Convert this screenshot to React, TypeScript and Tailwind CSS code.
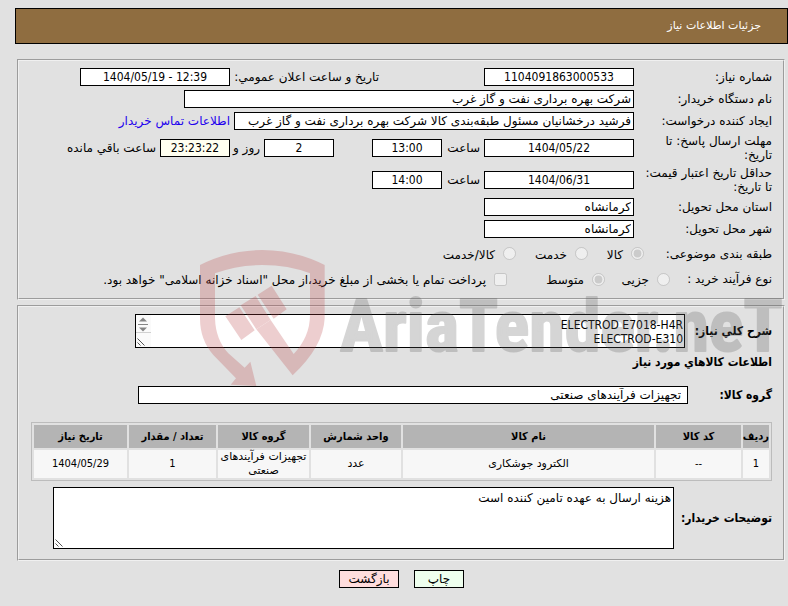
import React from 'react';
import { clsx } from 'clsx';

type FieldProps = {
  id: string;
  value: string;
  className?: string;
  label?: string;
};

const Field: React.FC<FieldProps> = ({ id, value, className, label }) => (
  <input
    id={id}
    type="text"
    readOnly
    aria-label={label}
    defaultValue={value}
    className={clsx('h-[18px] min-w-0 border border-black px-0.5 outline-none', className)}
  />
);

// centred numeric value, always read left to right
const NumberField: React.FC<FieldProps> = ({ id, value, className, label }) => (
  <input
    id={id}
    dir="ltr"
    type="text"
    readOnly
    aria-label={label}
    defaultValue={value}
    className={clsx(
      "h-[18px] min-w-0 border border-black text-center font-['DejaVu_Sans_Condensed','DejaVu_Sans',sans-serif] outline-none",
      className
    )}
  />
);

type RowProps = {
  label: React.ReactNode;
  htmlFor?: string;
  className?: string;
  children: React.ReactNode;
};

const Row: React.FC<RowProps> = ({ label, htmlFor, className, children }) => (
  <div className={clsx('flex items-center', className)}>
    <label htmlFor={htmlFor} className="w-[138px] shrink-0">
      {label}
    </label>
    <div className="flex min-w-0 flex-1 items-center gap-1">{children}</div>
  </div>
);

type ChoiceProps = {
  type?: 'radio' | 'checkbox';
  name: string;
  label: string;
  checked?: boolean;
  className?: string;
};

const Choice: React.FC<ChoiceProps> = ({ type = 'radio', name, label, checked, className }) => (
  <label className={clsx('flex shrink-0 items-center gap-2 whitespace-nowrap', className)}>
    <input type={type} name={name} disabled defaultChecked={checked} className="size-[13px]" />
    <span className="pt-0.5">{label}</span>
  </label>
);

const Grip: React.FC = () => (
  <svg className="absolute bottom-0.5 left-0.5 size-2" viewBox="0 0 8 8" stroke="#555" fill="none">
    <path d="M0.5 0.5L7.5 7.5M0.5 4.5L3.5 7.5" />
  </svg>
);

const columns = [
  { title: 'ردیف', width: 'w-[26px]' },
  { title: 'کد کالا', width: 'w-[85px]' },
  { title: 'نام کالا', width: '' },
  { title: 'واحد شمارش', width: 'w-[90px]' },
  { title: 'گروه کالا', width: 'w-[91px]' },
  { title: 'تعداد / مقدار', width: 'w-[87px]' },
  { title: 'تاریخ نیاز', width: 'w-[93px]' },
];

const items = [
  {
    row: '1',
    code: '--',
    name: 'الکترود جوشکاری',
    unit: 'عدد',
    group: 'تجهیزات فرآیندهای صنعتی',
    count: '1',
    date: '1404/05/29',
  },
];

const Watermark: React.FC = () => (
  <svg
    aria-hidden="true"
    className="pointer-events-none absolute left-[180px] top-[240px] h-[150px] w-[608px]"
    viewBox="0 0 1824 450"
    opacity="0.25"
  >
    <g fill="#bb4043">
      <path d="M60 75Q150 30 247 30Q345 30 434 75V235Q430 320 338 406L229 268L272 240L341 342Q390 290 390 225V100Q325 75 247 75Q170 75 105 100V235Q107 300 145 340L194 383L211 365L229 438L152 434L168 415L100 345Q60 300 60 235Z" />
      <path d="M136 229L178 202L224 271L184 300ZM182 196L227 168L272 240L229 268ZM233 164L275 137L320 208L281 236Z" />
    </g>
    <text
      x="480"
      y="333"
      direction="ltr"
      fill="#5a5a5a"
      stroke="#5a5a5a"
      strokeWidth="6"
      strokeLinejoin="round"
      className="font-['Liberation_Sans_Narrow','Roboto_Condensed',Roboto,sans-serif] text-[216px] font-bold"
    >
      AriaTender.neT
    </text>
  </svg>
);

export default function App() {
  return (
    <div
      dir="rtl"
      className="relative min-h-screen overflow-hidden bg-[#e1e1e1] pt-2 font-['DejaVu_Sans',sans-serif] text-[12px] leading-[14px] text-black"
    >
      <header className="ml-[15px] flex h-9 items-center border border-black bg-[#8f6d40] pr-[26px] text-[11px] text-white">
        <h1>جزئیات اطلاعات نیاز</h1>
      </header>

      <main className="ml-[17px] mr-[3px] mt-[15px]">
        <fieldset className="border-2 border-[#f0f0f0] pb-[7px] pr-[11px] pt-[5px] [border-style:groove]">
          <Row label="شماره نیاز:" htmlFor="number" className="h-[22px]">
            <NumberField id="number" value="1104091863000533" className="w-[150px] bg-white" />
            <label htmlFor="announced" className="ms-[101px] w-[145px] shrink-0 whitespace-nowrap">
              تاریخ و ساعت اعلان عمومي:
            </label>
            <NumberField id="announced" value="1404/05/19 - 12:39" className="w-[150px] bg-white" />
          </Row>
          <Row label="نام دستگاه خریدار:" htmlFor="buyer" className="h-[22px]">
            <Field id="buyer" value="شرکت بهره برداری نفت و گاز غرب" className="w-[450px] bg-white" />
          </Row>
          <Row label="ایجاد کننده درخواست:" htmlFor="creator" className="h-[22px]">
            <Field
              id="creator"
              value="فرشید درخشانیان مسئول طبقه‌بندی کالا شرکت بهره برداری نفت و گاز غرب"
              className="w-[400px] bg-white"
            />
            <a href="#contact" className="whitespace-nowrap text-[#2200ee]">
              اطلاعات تماس خریدار
            </a>
          </Row>
          <Row label={<>مهلت ارسال پاسخ: تا<br />تاریخ:</>} htmlFor="deadline" className="h-8">
            <NumberField id="deadline" value="1404/05/22" className="w-[150px] bg-white" />
            <label htmlFor="deadline-time" className="w-[34px] whitespace-nowrap">ساعت</label>
            <NumberField id="deadline-time" value="13:00" className="w-[70px] bg-white" />
            <NumberField id="days" label="روز" value="2" className="mr-[34px] w-[70px] bg-white" />
            <label htmlFor="days" className="w-[26px] whitespace-nowrap">روز و</label>
            <NumberField id="remaining" value="23:23:22" className="w-[70px] bg-[#fffff0]" />
            <label htmlFor="remaining" className="whitespace-nowrap">ساعت باقي مانده</label>
          </Row>
          <Row label={<>حداقل تاریخ اعتبار قیمت:<br />تا تاریخ:</>} htmlFor="validity" className="h-8">
            <NumberField id="validity" value="1404/06/31" className="w-[150px] bg-white" />
            <label htmlFor="validity-time" className="w-[34px] whitespace-nowrap">ساعت</label>
            <NumberField id="validity-time" value="14:00" className="w-[70px] bg-white" />
          </Row>
          <Row label="استان محل تحویل:" htmlFor="province" className="h-[22px]">
            <Field id="province" value="کرمانشاه" className="w-[150px] bg-white" />
          </Row>
          <Row label="شهر محل تحویل:" htmlFor="city" className="h-[22px]">
            <Field id="city" value="کرمانشاه" className="w-[150px] bg-white" />
          </Row>
          <div role="radiogroup" aria-label="طبقه بندی موضوعی" className="flex h-[27px] items-center">
            <span className="w-[128px] shrink-0">طبقه بندی موضوعی:</span>
            <Choice name="subject" label="کالا" checked className="w-14" />
            <Choice name="subject" label="خدمت" className="w-[72px]" />
            <Choice name="subject" label="کالا/خدمت" />
          </div>
          <div role="radiogroup" aria-label="نوع فرآیند خرید" className="flex h-6 items-center">
            <span className="w-[102px] shrink-0">نوع فرآیند خرید :</span>
            <Choice name="process" label="جزیی" className="w-[65px]" />
            <Choice name="process" label="متوسط" checked className="w-[98px]" />
            <Choice
              type="checkbox"
              name="treasury"
              label={'پرداخت تمام یا بخشی از مبلغ خرید،از محل "اسناد خزانه اسلامی" خواهد بود.'}
            />
          </div>
        </fieldset>

        <fieldset className="mt-[5px] border-2 border-[#f0f0f0] pb-2.5 pl-3 pr-[11px] pt-[7px] [border-style:groove]">
          <div className="flex items-center">
            <label
              htmlFor="summary"
              className="w-[87px] shrink-0 font-['DejaVu_Sans_Condensed','DejaVu_Sans',sans-serif] font-bold"
            >
              شرح کلي نیاز:
            </label>
            <div className="relative h-[34px] w-[550px]">
              <textarea
                id="summary"
                readOnly
                defaultValue={'ELECTROD E7018-H4R\nELECTROD-E310'}
                className="block size-full resize-none overflow-hidden border border-black bg-white px-px pt-[3px] font-['DejaVu_Sans_Condensed','DejaVu_Sans',sans-serif] outline-none"
              />
              <svg className="absolute left-px top-px h-8 w-[15px]" viewBox="0 0 15 32">
                <path d="M0 0H15V32H0Z" fill="#fafafa" />
                <path d="M3 6.5L7 2.5L11 6.5ZM3 12.5L7 16.5L11 12.5Z" fill="#858585" />
                <path d="M2 9.5H12" stroke="#858585" />
                <path d="M0 17.5H15" stroke="#d0d0d0" />
              </svg>
              <Grip />
            </div>
          </div>
          <h2 className="mt-[7px] font-['DejaVu_Sans_Condensed','DejaVu_Sans',sans-serif] font-bold">
            اطلاعات کالاهاي مورد نیاز
          </h2>
          <div className="mt-[17px] flex items-center">
            <label
              htmlFor="group"
              className="w-[84px] shrink-0 font-['DejaVu_Sans_Condensed','DejaVu_Sans',sans-serif] font-bold"
            >
              گروه کالا:
            </label>
            <input
              id="group"
              type="text"
              readOnly
              defaultValue="تجهیزات فرآیندهای صنعتی"
              className="h-[18px] w-[550px] border border-black bg-white px-1.5 outline-none"
            />
          </div>

          <table className="mt-[18px] w-full table-fixed border-separate border-spacing-0.5 border border-[#bcbcbc] text-center font-['DejaVu_Sans_Condensed','DejaVu_Sans',sans-serif] text-[11px] leading-[14px]">
            <thead>
              <tr className="h-[23px] bg-[#b4b4b4]">
                {columns.map((column) => (
                  <th key={column.title} className={clsx('whitespace-nowrap font-bold', column.width)}>
                    {column.title}
                  </th>
                ))}
              </tr>
            </thead>
            <tbody>
              {items.map((item) => (
                <tr key={item.row} className="h-[28px] bg-[#f7f7f7]">
                  <td>{item.row}</td>
                  <td>{item.code}</td>
                  <td className="font-['DejaVu_Sans',sans-serif]">{item.name}</td>
                  <td className="font-['DejaVu_Sans',sans-serif]">{item.unit}</td>
                  <td className="font-['DejaVu_Sans',sans-serif]">{item.group}</td>
                  <td>{item.count}</td>
                  <td>{item.date}</td>
                </tr>
              ))}
            </tbody>
          </table>

          <div className="mt-1.5 flex items-center">
            <label
              htmlFor="notes"
              className="w-[98px] shrink-0 font-['DejaVu_Sans_Condensed','DejaVu_Sans',sans-serif] font-bold"
            >
              توضیحات خریدار:
            </label>
            <div className="relative h-[62px] w-[621px]">
              <textarea
                id="notes"
                readOnly
                defaultValue="هزینه ارسال به عهده تامین کننده است"
                className="block size-full resize-none overflow-hidden border border-black bg-white px-0.5 pt-[3px] outline-none"
              />
              <Grip />
            </div>
          </div>
        </fieldset>
      </main>

      <div className="ml-[15px] mt-[9px] flex justify-center gap-[15px]">
        <button type="button" className="h-[18px] w-[50px] border border-black bg-[#eeffee]">
          چاپ
        </button>
        <button type="button" className="h-[18px] w-[60px] border border-black bg-[#ffdddd]">
          بازگشت
        </button>
      </div>

      <Watermark />
    </div>
  );
}
